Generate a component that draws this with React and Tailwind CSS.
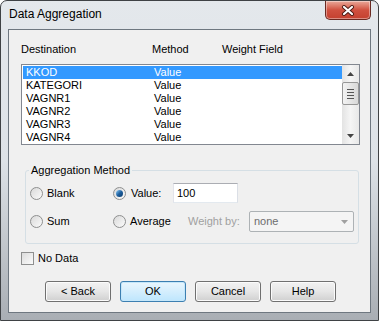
import React from "react";

const rows = ["KKOD", "KATEGORI", "VAGNR1", "VAGNR2", "VAGNR3", "VAGNR4"];

function Radio({ checked }) {
  return (
    <span className="w-[13px] h-[13px] rounded-full border border-[#8e8f8f] bg-gradient-to-br from-[#d9d9d9] to-[#fbfbfb] flex items-center justify-center shrink-0">
      {checked && (
        <span className="w-[7px] h-[7px] rounded-full bg-gradient-to-br from-[#8fd3ff] via-[#1d5f9e] to-[#0a3c6e]" />
      )}
    </span>
  );
}

function Button({ label, focused }) {
  return (
    <div
      className={`w-[66px] h-[21px] rounded-[3px] border flex items-center justify-center ${
        focused
          ? "border-[#3c7fb1] bg-gradient-to-b from-[#eaf6fd] to-[#bee6fd] shadow-[inset_0_0_0_1px_#c5e7fa]"
          : "border-[#707070] bg-gradient-to-b from-[#f2f2f2] via-[#e6e6e6] to-[#d0d0d0] shadow-[inset_0_0_0_1px_#fbfbfb]"
      }`}
    >
      {label}
    </div>
  );
}

export default function App() {
  return (
    <div
      className="w-[379px] h-[321px] flex flex-col px-[7px] pb-[7px] border border-[#3f4245] rounded-t-[7px] bg-gradient-to-b from-[#e4e8ec] via-[#dde2e7] to-[#a9aeb4] text-[11px] text-black"
      style={{ fontFamily: '"Liberation Sans", Arial, sans-serif' }}
    >
      {/* Title bar */}
      <div className="h-[28px] flex items-start justify-between">
        <span className="pl-[1px] pt-[6px] text-[12px] leading-[15px]">Data Aggregation</span>
        <div className="w-[46px] h-[19px] rounded-b-[5px] border border-t-0 border-[#6a2a22] bg-gradient-to-b from-[#e9a89a] via-[#d0503f] to-[#c4402f] flex items-center justify-center shadow-[inset_0_0_0_1px_rgba(255,255,255,0.4)]">
          <svg width="14" height="11" viewBox="0 0 14 11">
            <path d="M3 2 L11 9 M11 2 L3 9" stroke="#4a1a14" strokeWidth="4" strokeLinecap="round" />
            <path d="M3 2 L11 9 M11 2 L3 9" stroke="#ffffff" strokeWidth="2.2" strokeLinecap="round" />
          </svg>
        </div>
      </div>

      {/* Client area */}
      <div className="flex-1 border border-[#6e7780] bg-[#f0f0f0] flex flex-col pt-[13px] px-[12px]">
        {/* Header */}
        <div className="flex h-[13px] leading-[13px]">
          <span className="w-[131px]">Destination</span>
          <span className="w-[70px]">Method</span>
          <span>Weight Field</span>
        </div>

        {/* List */}
        <div className="mt-[8px] w-[339px] h-[81px] border border-[#828790] bg-white flex">
          <div className="flex-1 pl-[1px] pt-[1px]">
            {rows.map((r, i) => (
              <div
                key={r}
                className={`h-[13px] leading-[13px] flex ${i === 0 ? "bg-[#3399ff] text-white" : ""}`}
              >
                <span className="w-[131px] pl-[3px]">{r}</span>
                <span>Value</span>
              </div>
            ))}
          </div>
          <div className="w-[17px] flex flex-col bg-gradient-to-r from-[#e3e3e3] via-[#f5f5f5] to-[#e8e8e8]">
            <div className="h-[17px] flex items-center justify-center">
              <svg width="7" height="4" viewBox="0 0 7 4">
                <path d="M0 4 L3.5 0 L7 4 Z" fill="#444" />
              </svg>
            </div>
            <div className="h-[23px] mx-[0px] rounded-[2px] border border-[#979797] bg-gradient-to-r from-[#f3f3f3] to-[#d8d8d8] flex flex-col items-center justify-center gap-[2px]">
              <span className="w-[7px] h-[1px] bg-[#555]" />
              <span className="w-[7px] h-[1px] bg-[#555]" />
              <span className="w-[7px] h-[1px] bg-[#555]" />
              <span className="w-[7px] h-[1px] bg-[#555]" />
            </div>
            <div className="flex-1" />
            <div className="h-[17px] flex items-center justify-center">
              <svg width="7" height="4" viewBox="0 0 7 4">
                <path d="M0 0 L3.5 4 L7 0 Z" fill="#444" />
              </svg>
            </div>
          </div>
        </div>

        {/* Group box */}
        <div className="relative mt-[25px] ml-[4px] w-[334px] h-[74px] border border-[#d5dfe5] rounded-[3px] pt-[12px] pl-[4px]">
          <span className="absolute -top-[7px] left-[3px] px-[2px] bg-[#f0f0f0] leading-[13px]">
            Aggregation Method
          </span>
          <div className="flex items-center h-[20px]">
            <div className="w-[83px] flex items-center gap-[4px]">
              <Radio />
              <span>Blank</span>
            </div>
            <div className="w-[60px] flex items-center gap-[5px]">
              <Radio checked />
              <span>Value:</span>
            </div>
            <div className="w-[65px] h-[20px] border border-[#abadb3] border-l-[#e2e3ea] border-b-[#e3e9ef] border-r-[#dbdfe6] bg-white flex items-center pl-[3px]">
              100
            </div>
          </div>
          <div className="flex items-center h-[21px] mt-[8px]">
            <div className="w-[83px] flex items-center gap-[4px]">
              <Radio />
              <span>Sum</span>
            </div>
            <div className="w-[75px] flex items-center gap-[4px]">
              <Radio />
              <span>Average</span>
            </div>
            <span className="w-[61px] text-[#a0a0a0]">Weight by:</span>
            <div className="w-[105px] h-[21px] border border-[#adb2b5] rounded-[2px] bg-[#f4f4f4] flex items-center justify-between pl-[4px] pr-[5px] text-[#6d6d6d]">
              <span>none</span>
              <svg width="7" height="4" viewBox="0 0 7 4">
                <path d="M0 0 L3.5 4 L7 0 Z" fill="#a0a0a0" />
              </svg>
            </div>
          </div>
        </div>

        {/* No data */}
        <div className="mt-[8px] flex items-center gap-[4px] h-[13px]">
          <span className="w-[13px] h-[13px] border border-[#8e8f8f] bg-gradient-to-br from-[#dcdcdc] to-[#fbfbfb]" />
          <span>No Data</span>
        </div>

        {/* Buttons */}
        <div className="mt-[16px] ml-[24px] flex gap-[9px]">
          <Button label="< Back" />
          <Button label="OK" focused />
          <Button label="Cancel" />
          <Button label="Help" />
        </div>
      </div>
    </div>
  );
}
